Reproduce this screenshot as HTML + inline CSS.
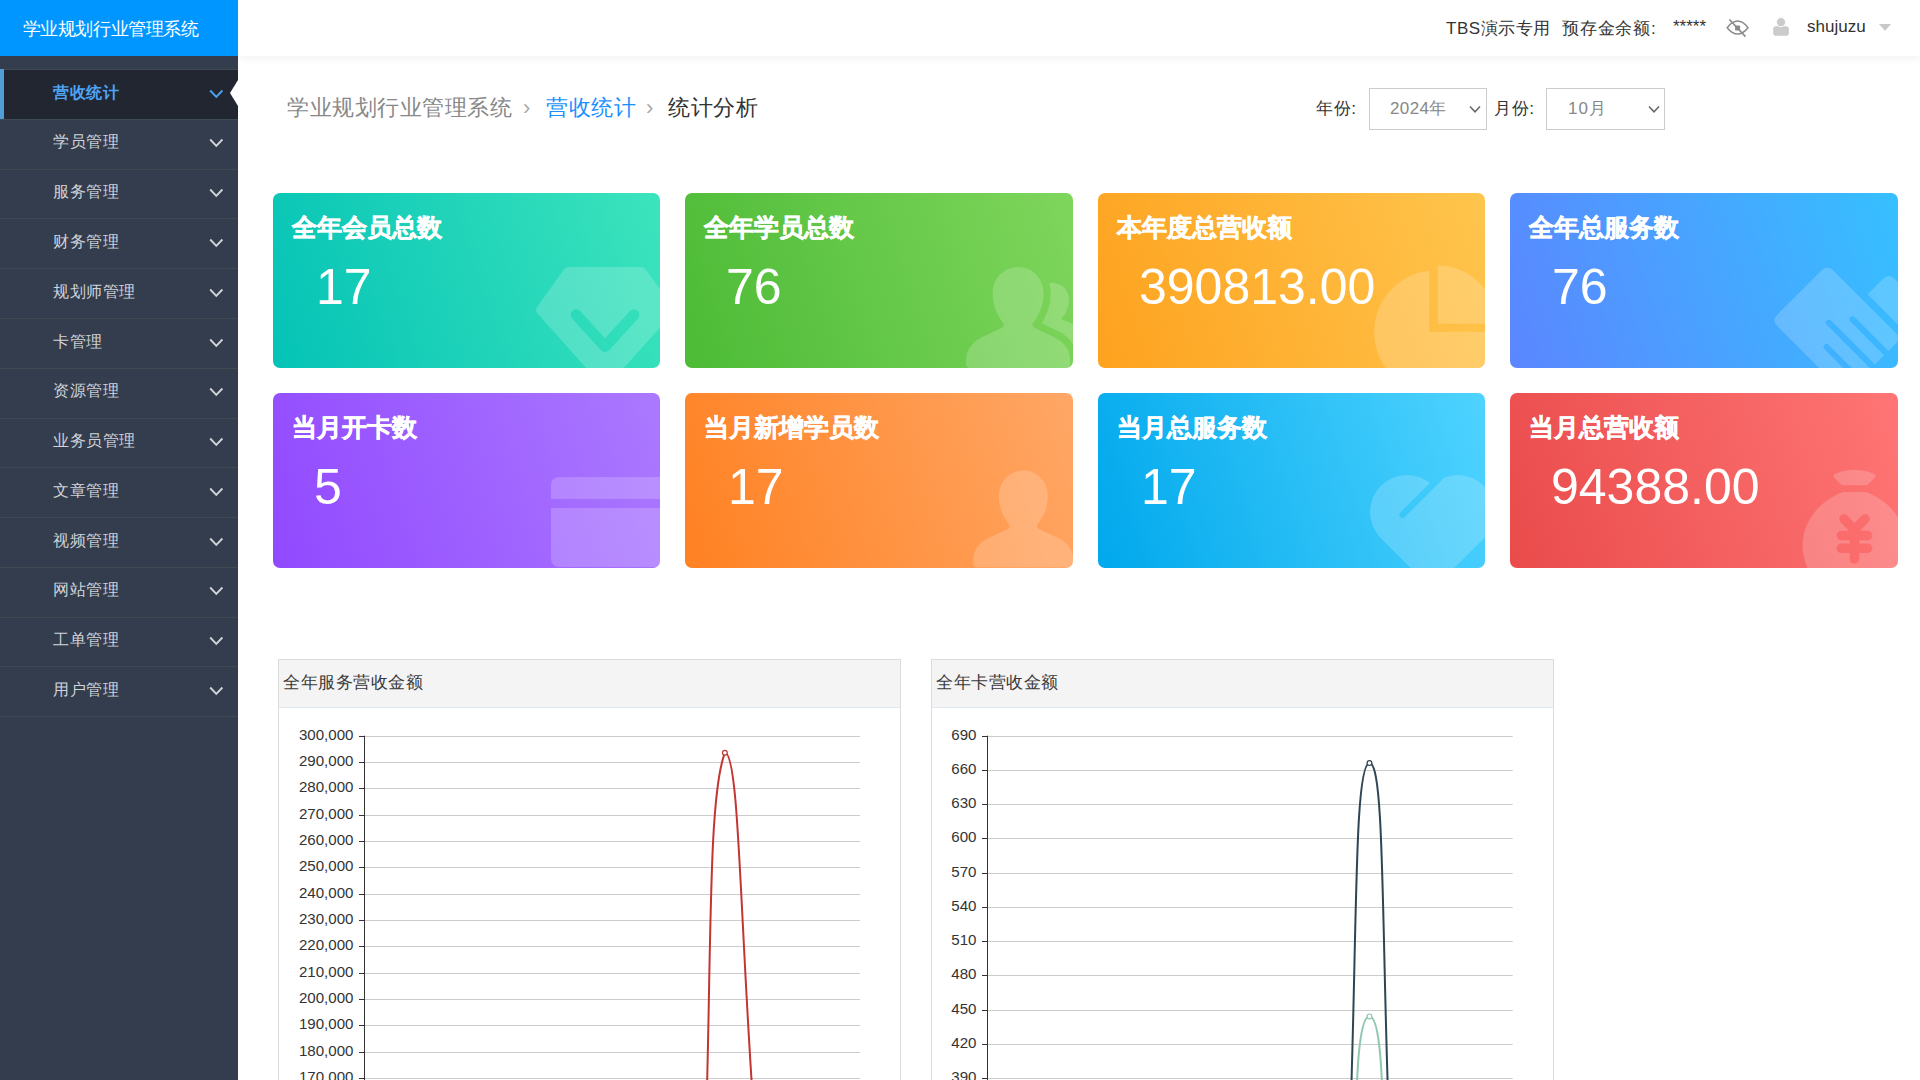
<!DOCTYPE html>
<html><head><meta charset="utf-8">
<style>
*{margin:0;padding:0;box-sizing:border-box}
html,body{width:1920px;height:1080px;overflow:hidden;background:#fff;font-family:"Liberation Sans",sans-serif}
#side{position:absolute;left:0;top:0;width:238px;height:1080px;background:#343d4d;z-index:2}
#logo{position:absolute;left:0;top:0;width:238px;height:56px;background:#0096ff;color:#fff;font-size:18px;line-height:58px;padding-left:22.5px;letter-spacing:-0.4px;white-space:nowrap}
.mi{position:absolute;left:0;width:238px;height:49.78px;border-top:1px solid #3e4a52;color:#d0d3d9;font-size:16px}
.mi span{position:absolute;left:53px;top:11.5px;line-height:22px;letter-spacing:0.5px;white-space:nowrap}
.mi svg{position:absolute;left:208.5px;top:18.5px}
.mi.act{background:#212631;color:#4ea3f2;font-weight:bold}
.mi.act:before{content:"";position:absolute;left:0;top:-1px;width:4px;height:51px;background:#4f9fd6}
#tri{position:absolute;left:230px;top:80px;width:0;height:0;border-top:13px solid transparent;border-bottom:13px solid transparent;border-right:8px solid #fff}
#hdr{position:absolute;left:238px;top:0;width:1682px;height:56px;background:#fff;box-shadow:0 2px 8px rgba(0,0,0,.06);z-index:1}
.ht{position:absolute;top:17.5px;font-size:17px;line-height:22px;color:#333;white-space:nowrap}
.bc{position:absolute;top:94.5px;font-size:22px;letter-spacing:0.5px;line-height:26px;white-space:nowrap}
.lab{position:absolute;top:97.5px;font-size:17px;line-height:22px;color:#333;white-space:nowrap}
.sel{position:absolute;top:88px;height:42px;border:1px solid #ccc;background:#fff}
.sel span{position:absolute;top:9px;font-size:17px;line-height:22px;color:#888;white-space:nowrap}
.sel svg{position:absolute;top:16px}
.card{position:absolute;width:387.5px;height:175px;border-radius:7px;overflow:hidden;color:#fff}
.card .t{position:absolute;left:19px;top:19px;font-size:25px;font-weight:bold;line-height:30px;white-space:nowrap;-webkit-text-stroke:0.5px #fff}
.card .n{position:absolute;left:41px;top:66px;font-size:50px;line-height:56px;white-space:nowrap}
.card svg{position:absolute;left:0;top:0}
.panel{position:absolute;top:659px;width:623px;height:440px;border:1px solid #dcdcdc;background:#fff}
.panel .ph{position:absolute;left:0;top:0;width:621px;height:48px;background:#f4f4f4;border-bottom:1px solid #dfe8f0}
.panel .ph span{position:absolute;left:4px;top:11px;font-size:17px;color:#3a3a3a;line-height:24px;letter-spacing:0.5px;white-space:nowrap}

</style></head>
<body>
<div id="side">
<div id="logo">学业规划行业管理系统</div>
<div class="mi act" style="top:69.10px"><span>营收统计</span><svg width="15" height="10" viewBox="0 0 15 10"><path d="M1.2 1.5 L7.3 7.8 L13.4 1.5" fill="none" stroke="#4ea3f2" stroke-width="1.9"/></svg></div>
<div class="mi" style="top:118.88px"><span>学员管理</span><svg width="15" height="10" viewBox="0 0 15 10"><path d="M1.2 1.5 L7.3 7.8 L13.4 1.5" fill="none" stroke="#d0d3d9" stroke-width="1.9"/></svg></div>
<div class="mi" style="top:168.66px"><span>服务管理</span><svg width="15" height="10" viewBox="0 0 15 10"><path d="M1.2 1.5 L7.3 7.8 L13.4 1.5" fill="none" stroke="#d0d3d9" stroke-width="1.9"/></svg></div>
<div class="mi" style="top:218.44px"><span>财务管理</span><svg width="15" height="10" viewBox="0 0 15 10"><path d="M1.2 1.5 L7.3 7.8 L13.4 1.5" fill="none" stroke="#d0d3d9" stroke-width="1.9"/></svg></div>
<div class="mi" style="top:268.22px"><span>规划师管理</span><svg width="15" height="10" viewBox="0 0 15 10"><path d="M1.2 1.5 L7.3 7.8 L13.4 1.5" fill="none" stroke="#d0d3d9" stroke-width="1.9"/></svg></div>
<div class="mi" style="top:318.00px"><span>卡管理</span><svg width="15" height="10" viewBox="0 0 15 10"><path d="M1.2 1.5 L7.3 7.8 L13.4 1.5" fill="none" stroke="#d0d3d9" stroke-width="1.9"/></svg></div>
<div class="mi" style="top:367.78px"><span>资源管理</span><svg width="15" height="10" viewBox="0 0 15 10"><path d="M1.2 1.5 L7.3 7.8 L13.4 1.5" fill="none" stroke="#d0d3d9" stroke-width="1.9"/></svg></div>
<div class="mi" style="top:417.56px"><span>业务员管理</span><svg width="15" height="10" viewBox="0 0 15 10"><path d="M1.2 1.5 L7.3 7.8 L13.4 1.5" fill="none" stroke="#d0d3d9" stroke-width="1.9"/></svg></div>
<div class="mi" style="top:467.34px"><span>文章管理</span><svg width="15" height="10" viewBox="0 0 15 10"><path d="M1.2 1.5 L7.3 7.8 L13.4 1.5" fill="none" stroke="#d0d3d9" stroke-width="1.9"/></svg></div>
<div class="mi" style="top:517.12px"><span>视频管理</span><svg width="15" height="10" viewBox="0 0 15 10"><path d="M1.2 1.5 L7.3 7.8 L13.4 1.5" fill="none" stroke="#d0d3d9" stroke-width="1.9"/></svg></div>
<div class="mi" style="top:566.90px"><span>网站管理</span><svg width="15" height="10" viewBox="0 0 15 10"><path d="M1.2 1.5 L7.3 7.8 L13.4 1.5" fill="none" stroke="#d0d3d9" stroke-width="1.9"/></svg></div>
<div class="mi" style="top:616.68px"><span>工单管理</span><svg width="15" height="10" viewBox="0 0 15 10"><path d="M1.2 1.5 L7.3 7.8 L13.4 1.5" fill="none" stroke="#d0d3d9" stroke-width="1.9"/></svg></div>
<div class="mi" style="top:666.46px"><span>用户管理</span><svg width="15" height="10" viewBox="0 0 15 10"><path d="M1.2 1.5 L7.3 7.8 L13.4 1.5" fill="none" stroke="#d0d3d9" stroke-width="1.9"/></svg></div>
<div class="mi" style="top:716.24px;height:2px"></div>
<div id="tri"></div>
</div>
<div id="hdr">
<div class="ht" style="left:1208px;letter-spacing:0.5px">TBS演示专用</div>
<div class="ht" style="left:1324px;letter-spacing:0.8px">预存金余额:</div>
<div class="ht" style="left:1435px;top:16px">*****</div>
<div class="ht" style="left:1569px;top:16px">shujuzu</div>
</div>
<svg width="1920" height="56" style="position:absolute;left:0;top:0;z-index:3">
<g fill="none" stroke="#8a8a8a" stroke-width="1.5">
<path d="M1727.2,27.7 C1731,22.8 1734,21.1 1737.6,21.1 C1741.2,21.1 1744.2,22.8 1748,27.7 C1744.2,32.5 1741.2,34.1 1737.6,34.1 C1734,34.1 1731,32.5 1727.2,27.7 Z"/>
<path d="M1729.4,19.5 L1745.5,36.6" stroke-width="1.6"/>
</g>
<rect x="1735.1" y="25.4" width="5" height="5.2" rx="1.2" fill="#8a8a8a"/>
<rect x="1773.2" y="26.2" width="15.7" height="9.5" rx="2.8" fill="#cbcbcb"/>
<circle cx="1781" cy="22.2" r="4.6" fill="#cbcbcb" stroke="#fff" stroke-width="0.9"/>
<path d="M1878.9,24.1 L1891.1,24.1 L1885,30.7 Z" fill="#c8c8c8"/>
</svg>
<div class="bc" style="left:287px;color:#888">学业规划行业管理系统</div>
<div class="bc" style="left:523px;color:#aaa">›</div>
<div class="bc" style="left:546px;color:#1a90ff">营收统计</div>
<div class="bc" style="left:646px;color:#aaa">›</div>
<div class="bc" style="left:668px;color:#333">统计分析</div>
<div class="lab" style="left:1316px;letter-spacing:0.6px">年份:</div>
<div class="sel" style="left:1369px;width:118px"><span style="left:20px;letter-spacing:0.4px">2024年</span><svg style="left:99px" width="13" height="9" viewBox="0 0 13 9"><path d="M1 1.5 L6 6.8 L11 1.5" fill="none" stroke="#666" stroke-width="1.5"/></svg></div>
<div class="lab" style="left:1494px;letter-spacing:0.6px">月份:</div>
<div class="sel" style="left:1546px;width:119px"><span style="left:21px;letter-spacing:1px">10月</span><svg style="left:101px" width="13" height="9" viewBox="0 0 13 9"><path d="M1 1.5 L6 6.8 L11 1.5" fill="none" stroke="#666" stroke-width="1.5"/></svg></div>

<div class="card" style="left:273px;top:193px;width:387px;background:linear-gradient(72deg,#04c3b6,#3ce4bc)"><svg width="388" height="175" viewBox="273 193 388 175"><defs><mask id="mk0" maskUnits="userSpaceOnUse" x="0" y="0" width="1920" height="1080"><rect x="0" y="0" width="1920" height="1080" fill="#fff"/><path d="M576.1,314.8 L605,346.5 L634,314.8" fill="none" stroke="#000" stroke-width="11" stroke-linecap="round" stroke-linejoin="round"/></mask></defs>
<path mask="url(#mk0)" fill="#fff" fill-opacity="0.19" stroke="#fff" stroke-opacity="0" d="M569,267 L640.5,267 Q644,267 646,270 L673,307 Q675,310 673,313 L609,384.5 Q605,388 601,384.5 L537,313 Q535,310 537,307 L563.5,270 Q565.5,267 569,267 Z"/></svg><div class="t">全年会员总数</div><div class="n" style="left:43px">17</div></div>
<div class="card" style="left:685px;top:193px;width:388px;background:linear-gradient(72deg,#4cbb36,#7fd65c)"><svg width="388" height="175" viewBox="685 193 388 175"><defs><mask id="mk1" maskUnits="userSpaceOnUse" x="0" y="0" width="1920" height="1080"><rect x="0" y="0" width="1920" height="1080" fill="#fff"/><g fill="#000" stroke="#000" stroke-width="14" stroke-linejoin="round"><path transform="translate(1018.1,267.1) scale(1.02)" d="M -14.5,55 C -21,47 -25,37 -25,26 C -25,11 -14,0 0,0 C 14,0 25,11 25,26 C 25,37 21,47 14.5,55 C 13.5,57 14,58.5 16,59.5 L 36,69 C 46,74 51,82 51,91 L 51,95 C 51,98 49,99 46,99 L -46,99 C -49,99 -51,98 -51,95 L -51,91 C -51,82 -46,74 -36,69 L -16,59.5 C -14,58.5 -13.5,57 -14.5,55 Z"/></g></mask></defs>
<g fill="#fff" fill-opacity="0.19">
<path mask="url(#mk1)" d="M1040,290 C1040,283 1046,283 1054,283 C1063,284 1069,291 1069,300 C1069,307 1066,314 1061,319 C1068,322 1075,325 1085,329 L1085,380 L1040,380 Z"/>
<path transform="translate(1018.1,267.1) scale(1.02)" d="M -14.5,55 C -21,47 -25,37 -25,26 C -25,11 -14,0 0,0 C 14,0 25,11 25,26 C 25,37 21,47 14.5,55 C 13.5,57 14,58.5 16,59.5 L 36,69 C 46,74 51,82 51,91 L 51,95 C 51,98 49,99 46,99 L -46,99 C -49,99 -51,98 -51,95 L -51,91 C -51,82 -46,74 -36,69 L -16,59.5 C -14,58.5 -13.5,57 -14.5,55 Z"/>
</g></svg><div class="t">全年学员总数</div><div class="n" style="left:41px">76</div></div>
<div class="card" style="left:1098px;top:193px;width:387px;background:linear-gradient(72deg,#fea21f,#ffc54d)"><svg width="388" height="175" viewBox="1098 193 388 175"><g fill="#fff" fill-opacity="0.19">
<path d="M1429.2,331.8 L1429.2,270.8 A61.5,61.5 0 1 0 1497.1,331.8 Z"/>
<path d="M1437.8,323.8 L1437.8,265.6 A58.2,58.2 0 0 1 1496,323.8 Z"/>
</g></svg><div class="t">本年度总营收额</div><div class="n" style="left:41px">390813.00</div></div>
<div class="card" style="left:1510px;top:193px;width:388px;background:linear-gradient(72deg,#5b86ff,#36c0ff)"><svg width="388" height="175" viewBox="1510 193 388 175"><defs><mask id="mk3" maskUnits="userSpaceOnUse" x="0" y="0" width="1920" height="1080"><rect x="0" y="0" width="1920" height="1080" fill="#fff"/><g stroke="#000" stroke-width="6" stroke-linecap="round">
<path d="M1828.9,322.7 L1900,393.8"/><path d="M1852.6,319.4 L1923,389.8"/><path d="M1826.5,347 L1880,400.5"/></g></mask></defs>
<g fill="#fff" fill-opacity="0.19">
<path mask="url(#mk3)" d="M1821.74,270.26 Q1827.4,264.6 1833.06,270.26 L1895.39,332.59 Q1901.05,338.25 1895.39,343.91 L1850.86,388.44 Q1845.2,394.1 1839.54,388.44 L1777.26,326.11 Q1771.6,320.45 1777.26,314.79 Z"/>
<path d="M1867.65,294.35 L1883.2,278.8 Q1888.85,273.15 1894.5,278.8 L1990,374.3 L1960,386.7 Z"/>
</g></svg><div class="t">全年总服务数</div><div class="n" style="left:42px">76</div></div>
<div class="card" style="left:273px;top:393px;width:387px;background:linear-gradient(72deg,#9149ff,#ab79ff)"><svg width="388" height="175" viewBox="273 393 388 175"><defs><mask id="mk4" maskUnits="userSpaceOnUse" x="0" y="0" width="1920" height="1080"><rect x="0" y="0" width="1920" height="1080" fill="#fff"/><rect x="540" y="499" width="200" height="9" fill="#000"/></mask></defs>
<rect mask="url(#mk4)" x="551" y="477" width="160" height="90" rx="8" fill="#fff" fill-opacity="0.19"/></svg><div class="t">当月开卡数</div><div class="n" style="left:41px">5</div></div>
<div class="card" style="left:685px;top:393px;width:388px;background:linear-gradient(72deg,#ff8122,#ffa766)"><svg width="388" height="175" viewBox="685 393 388 175"><g fill="#fff" fill-opacity="0.19"><path transform="translate(1023.3,470.6) scale(0.98)" d="M -14.5,55 C -21,47 -25,37 -25,26 C -25,11 -14,0 0,0 C 14,0 25,11 25,26 C 25,37 21,47 14.5,55 C 13.5,57 14,58.5 16,59.5 L 36,69 C 46,74 51,82 51,91 L 51,95 C 51,98 49,99 46,99 L -46,99 C -49,99 -51,98 -51,95 L -51,91 C -51,82 -46,74 -36,69 L -16,59.5 C -14,58.5 -13.5,57 -14.5,55 Z"/></g></svg><div class="t">当月新增学员数</div><div class="n" style="left:43px">17</div></div>
<div class="card" style="left:1098px;top:393px;width:387px;background:linear-gradient(72deg,#00a8ec,#4fd3ff)"><svg width="388" height="175" viewBox="1098 393 388 175"><defs><mask id="mk6" maskUnits="userSpaceOnUse" x="0" y="0" width="1920" height="1080"><rect x="0" y="0" width="1920" height="1080" fill="#fff"/><path d="M1402.6,514.8 L1440,477.4" stroke="#000" stroke-width="6.4" stroke-linecap="round"/></mask></defs>
<g mask="url(#mk6)"><path fill="#fff" fill-opacity="0.19" d="M1432.4,589.7 L1380.34,537.66 A37,37 0 0 1 1432.4,485.1 A37,37 0 0 1 1484.46,537.66 Z"/></g></svg><div class="t">当月总服务数</div><div class="n" style="left:43px">17</div></div>
<div class="card" style="left:1510px;top:393px;width:388px;background:linear-gradient(72deg,#ea4b4b,#ff7575)"><svg width="388" height="175" viewBox="1510 393 388 175"><defs><mask id="mk7" maskUnits="userSpaceOnUse" x="0" y="0" width="1920" height="1080"><rect x="0" y="0" width="1920" height="1080" fill="#fff"/><g stroke="#000" stroke-width="9.5" stroke-linecap="round" stroke-linejoin="round" fill="none">
<path d="M1843.9,518.9 L1854.5,529.5 L1865.1,518.9"/><path d="M1854.5,529.5 L1854.5,558.9"/><path d="M1841.4,535.6 L1867.6,535.6"/><path d="M1841.4,548.3 L1867.6,548.3"/></g></mask></defs>
<g fill="#fff" fill-opacity="0.19">
<path d="M1836,473.5 Q1854.5,466 1873,473.5 Q1877,475 1874.5,478 L1867.2,485.2 L1841.7,485.2 L1834.5,478 Q1832,475 1836,473.5 Z"/>
<path mask="url(#mk7)" d="M1843,492 L1866,492 C1889,500 1906.5,522 1906.5,545 C1906.5,575 1883,597 1854.5,597 C1826,597 1802.5,575 1802.5,545 C1802.5,522 1820,500 1843,492 Z"/>
</g></svg><div class="t">当月总营收额</div><div class="n" style="left:41px">94388.00</div></div>
<div class="panel" style="left:278px"><div class="ph"><span>全年服务营收金额</span></div></div>
<div class="panel" style="left:931px"><div class="ph"><span>全年卡营收金额</span></div></div>
<svg id="charts" width="1920" height="1080" style="position:absolute;left:0;top:0;z-index:1" font-family="Liberation Sans, sans-serif" font-size="15" fill="#333">
<g fill="#333"><line x1="365.0" y1="736.5" x2="860" y2="736.5" stroke="#ccc" stroke-width="1"/>
<line x1="359.0" y1="736.5" x2="365.0" y2="736.5" stroke="#333" stroke-width="1"/>
<text x="353.5" y="739.6" text-anchor="end" textLength="54.6" lengthAdjust="spacingAndGlyphs">300,000</text>
<line x1="365.0" y1="762.5" x2="860" y2="762.5" stroke="#ccc" stroke-width="1"/>
<line x1="359.0" y1="762.5" x2="365.0" y2="762.5" stroke="#333" stroke-width="1"/>
<text x="353.5" y="765.6" text-anchor="end" textLength="54.6" lengthAdjust="spacingAndGlyphs">290,000</text>
<line x1="365.0" y1="788.5" x2="860" y2="788.5" stroke="#ccc" stroke-width="1"/>
<line x1="359.0" y1="788.5" x2="365.0" y2="788.5" stroke="#333" stroke-width="1"/>
<text x="353.5" y="791.6" text-anchor="end" textLength="54.6" lengthAdjust="spacingAndGlyphs">280,000</text>
<line x1="365.0" y1="815.5" x2="860" y2="815.5" stroke="#ccc" stroke-width="1"/>
<line x1="359.0" y1="815.5" x2="365.0" y2="815.5" stroke="#333" stroke-width="1"/>
<text x="353.5" y="818.6" text-anchor="end" textLength="54.6" lengthAdjust="spacingAndGlyphs">270,000</text>
<line x1="365.0" y1="841.5" x2="860" y2="841.5" stroke="#ccc" stroke-width="1"/>
<line x1="359.0" y1="841.5" x2="365.0" y2="841.5" stroke="#333" stroke-width="1"/>
<text x="353.5" y="844.6" text-anchor="end" textLength="54.6" lengthAdjust="spacingAndGlyphs">260,000</text>
<line x1="365.0" y1="867.5" x2="860" y2="867.5" stroke="#ccc" stroke-width="1"/>
<line x1="359.0" y1="867.5" x2="365.0" y2="867.5" stroke="#333" stroke-width="1"/>
<text x="353.5" y="870.6" text-anchor="end" textLength="54.6" lengthAdjust="spacingAndGlyphs">250,000</text>
<line x1="365.0" y1="894.5" x2="860" y2="894.5" stroke="#ccc" stroke-width="1"/>
<line x1="359.0" y1="894.5" x2="365.0" y2="894.5" stroke="#333" stroke-width="1"/>
<text x="353.5" y="897.6" text-anchor="end" textLength="54.6" lengthAdjust="spacingAndGlyphs">240,000</text>
<line x1="365.0" y1="920.5" x2="860" y2="920.5" stroke="#ccc" stroke-width="1"/>
<line x1="359.0" y1="920.5" x2="365.0" y2="920.5" stroke="#333" stroke-width="1"/>
<text x="353.5" y="923.6" text-anchor="end" textLength="54.6" lengthAdjust="spacingAndGlyphs">230,000</text>
<line x1="365.0" y1="946.5" x2="860" y2="946.5" stroke="#ccc" stroke-width="1"/>
<line x1="359.0" y1="946.5" x2="365.0" y2="946.5" stroke="#333" stroke-width="1"/>
<text x="353.5" y="949.6" text-anchor="end" textLength="54.6" lengthAdjust="spacingAndGlyphs">220,000</text>
<line x1="365.0" y1="973.5" x2="860" y2="973.5" stroke="#ccc" stroke-width="1"/>
<line x1="359.0" y1="973.5" x2="365.0" y2="973.5" stroke="#333" stroke-width="1"/>
<text x="353.5" y="976.6" text-anchor="end" textLength="54.6" lengthAdjust="spacingAndGlyphs">210,000</text>
<line x1="365.0" y1="999.5" x2="860" y2="999.5" stroke="#ccc" stroke-width="1"/>
<line x1="359.0" y1="999.5" x2="365.0" y2="999.5" stroke="#333" stroke-width="1"/>
<text x="353.5" y="1002.6" text-anchor="end" textLength="54.6" lengthAdjust="spacingAndGlyphs">200,000</text>
<line x1="365.0" y1="1025.5" x2="860" y2="1025.5" stroke="#ccc" stroke-width="1"/>
<line x1="359.0" y1="1025.5" x2="365.0" y2="1025.5" stroke="#333" stroke-width="1"/>
<text x="353.5" y="1028.6" text-anchor="end" textLength="54.6" lengthAdjust="spacingAndGlyphs">190,000</text>
<line x1="365.0" y1="1052.5" x2="860" y2="1052.5" stroke="#ccc" stroke-width="1"/>
<line x1="359.0" y1="1052.5" x2="365.0" y2="1052.5" stroke="#333" stroke-width="1"/>
<text x="353.5" y="1055.6" text-anchor="end" textLength="54.6" lengthAdjust="spacingAndGlyphs">180,000</text>
<line x1="365.0" y1="1078.5" x2="860" y2="1078.5" stroke="#ccc" stroke-width="1"/>
<line x1="359.0" y1="1078.5" x2="365.0" y2="1078.5" stroke="#333" stroke-width="1"/>
<text x="353.5" y="1081.6" text-anchor="end" textLength="54.6" lengthAdjust="spacingAndGlyphs">170,000</text>
<line x1="364.5" y1="735.7" x2="364.5" y2="1080" stroke="#333" stroke-width="1"/>
<path d="M589.73,1525.60 C612.25,1525.60 612.25,1525.60 634.77,1525.60 C657.30,1525.60 677.34,1525.60 679.82,1525.60 C722.39,1160.46 698.28,822.73 724.86,752.81 C743.33,752.81 738.81,1021.89 769.91,1288.63 C783.86,1408.29 777.00,1425.76 814.95,1525.60 C822.04,1525.60 860.00,1525.60 860.00,1525.60" fill="none" stroke="#c23531" stroke-width="2" stroke-linejoin="bevel"/>
<circle cx="724.86" cy="752.81" r="2.4" fill="#fff" stroke="#c23531" stroke-width="1.2"/>
<line x1="988.0" y1="736.5" x2="1512.7" y2="736.5" stroke="#ccc" stroke-width="1"/>
<line x1="982.0" y1="736.5" x2="988.0" y2="736.5" stroke="#333" stroke-width="1"/>
<text x="976.5" y="739.6" text-anchor="end" textLength="25.2" lengthAdjust="spacingAndGlyphs">690</text>
<line x1="988.0" y1="770.5" x2="1512.7" y2="770.5" stroke="#ccc" stroke-width="1"/>
<line x1="982.0" y1="770.5" x2="988.0" y2="770.5" stroke="#333" stroke-width="1"/>
<text x="976.5" y="773.6" text-anchor="end" textLength="25.2" lengthAdjust="spacingAndGlyphs">660</text>
<line x1="988.0" y1="804.5" x2="1512.7" y2="804.5" stroke="#ccc" stroke-width="1"/>
<line x1="982.0" y1="804.5" x2="988.0" y2="804.5" stroke="#333" stroke-width="1"/>
<text x="976.5" y="807.6" text-anchor="end" textLength="25.2" lengthAdjust="spacingAndGlyphs">630</text>
<line x1="988.0" y1="838.5" x2="1512.7" y2="838.5" stroke="#ccc" stroke-width="1"/>
<line x1="982.0" y1="838.5" x2="988.0" y2="838.5" stroke="#333" stroke-width="1"/>
<text x="976.5" y="841.6" text-anchor="end" textLength="25.2" lengthAdjust="spacingAndGlyphs">600</text>
<line x1="988.0" y1="873.5" x2="1512.7" y2="873.5" stroke="#ccc" stroke-width="1"/>
<line x1="982.0" y1="873.5" x2="988.0" y2="873.5" stroke="#333" stroke-width="1"/>
<text x="976.5" y="876.6" text-anchor="end" textLength="25.2" lengthAdjust="spacingAndGlyphs">570</text>
<line x1="988.0" y1="907.5" x2="1512.7" y2="907.5" stroke="#ccc" stroke-width="1"/>
<line x1="982.0" y1="907.5" x2="988.0" y2="907.5" stroke="#333" stroke-width="1"/>
<text x="976.5" y="910.6" text-anchor="end" textLength="25.2" lengthAdjust="spacingAndGlyphs">540</text>
<line x1="988.0" y1="941.5" x2="1512.7" y2="941.5" stroke="#ccc" stroke-width="1"/>
<line x1="982.0" y1="941.5" x2="988.0" y2="941.5" stroke="#333" stroke-width="1"/>
<text x="976.5" y="944.6" text-anchor="end" textLength="25.2" lengthAdjust="spacingAndGlyphs">510</text>
<line x1="988.0" y1="975.5" x2="1512.7" y2="975.5" stroke="#ccc" stroke-width="1"/>
<line x1="982.0" y1="975.5" x2="988.0" y2="975.5" stroke="#333" stroke-width="1"/>
<text x="976.5" y="978.6" text-anchor="end" textLength="25.2" lengthAdjust="spacingAndGlyphs">480</text>
<line x1="988.0" y1="1010.5" x2="1512.7" y2="1010.5" stroke="#ccc" stroke-width="1"/>
<line x1="982.0" y1="1010.5" x2="988.0" y2="1010.5" stroke="#333" stroke-width="1"/>
<text x="976.5" y="1013.6" text-anchor="end" textLength="25.2" lengthAdjust="spacingAndGlyphs">450</text>
<line x1="988.0" y1="1044.5" x2="1512.7" y2="1044.5" stroke="#ccc" stroke-width="1"/>
<line x1="982.0" y1="1044.5" x2="988.0" y2="1044.5" stroke="#333" stroke-width="1"/>
<text x="976.5" y="1047.6" text-anchor="end" textLength="25.2" lengthAdjust="spacingAndGlyphs">420</text>
<line x1="988.0" y1="1078.5" x2="1512.7" y2="1078.5" stroke="#ccc" stroke-width="1"/>
<line x1="982.0" y1="1078.5" x2="988.0" y2="1078.5" stroke="#333" stroke-width="1"/>
<text x="976.5" y="1081.6" text-anchor="end" textLength="25.2" lengthAdjust="spacingAndGlyphs">390</text>
<line x1="987.5" y1="735.7" x2="987.5" y2="1080" stroke="#333" stroke-width="1"/>
<path d="M1226.23,1522.99 C1250.10,1522.99 1250.10,1522.99 1273.97,1522.99 C1297.85,1522.99 1318.90,1522.99 1321.72,1522.99 C1366.65,1165.46 1345.41,765.96 1369.46,763.08 C1393.16,763.08 1372.40,1154.97 1417.21,1511.58 C1420.14,1522.99 1440.75,1520.10 1464.95,1522.99 C1488.50,1522.99 1512.70,1522.99 1512.70,1522.99" fill="none" stroke="#2f4554" stroke-width="2" stroke-linejoin="bevel"/>
<circle cx="1369.46" cy="763.08" r="2.4" fill="#fff" stroke="#2f4554" stroke-width="1.2"/>
<path d="M1226.23,1522.99 C1250.10,1522.99 1250.10,1522.99 1273.97,1522.99 C1297.85,1522.99 1317.62,1522.99 1321.72,1522.99 C1365.37,1291.42 1345.59,1016.39 1369.46,1016.39 C1393.34,1016.39 1373.56,1291.42 1417.21,1522.99 C1421.30,1522.99 1441.08,1522.99 1464.95,1522.99 C1488.83,1522.99 1512.70,1522.99 1512.70,1522.99" fill="none" stroke="#91c7ae" stroke-width="2" stroke-linejoin="bevel"/>
<circle cx="1369.46" cy="1016.39" r="2.4" fill="#fff" stroke="#91c7ae" stroke-width="1.2"/></g>
</svg>
</body></html>
